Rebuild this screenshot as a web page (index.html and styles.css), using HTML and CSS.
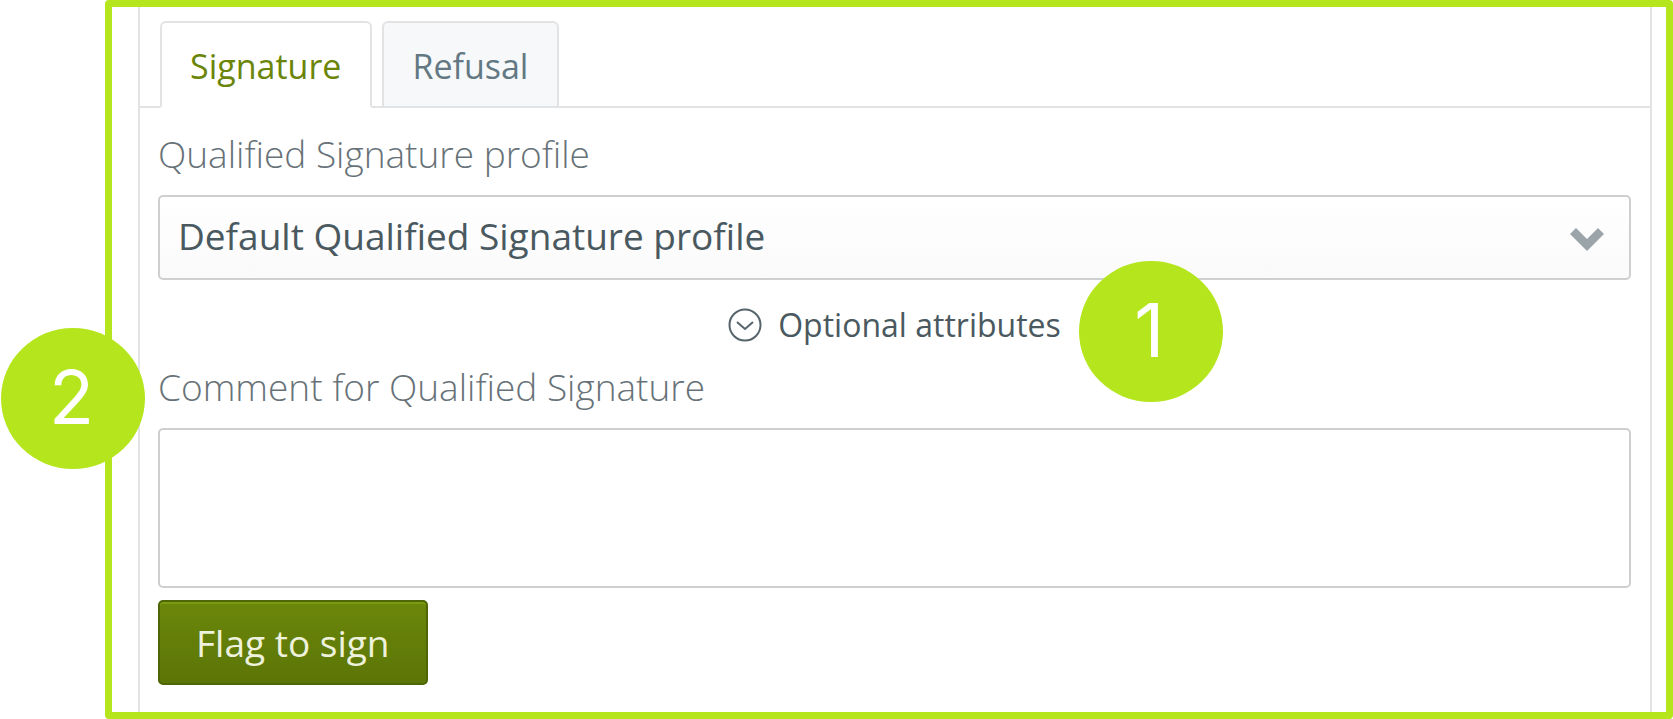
FILE: index.html
```html
<!DOCTYPE html>
<html lang="en">
<head>
<meta charset="utf-8">
<title>Qualified Signature</title>
<link rel="stylesheet" href="styles.css">
</head>
<body>
<main class="callout">
  <span class="badge badge-frame">2</span>
  <form class="panel">
    <div class="tabs" role="tablist">
      <button class="tab tab-active" type="button" role="tab" aria-selected="true">Signature</button>
      <button class="tab" type="button" role="tab" aria-selected="false">Refusal</button>
    </div>
    <div class="fields">
      <label class="label" for="profile">Qualified Signature profile</label>
      <div class="select-wrap">
        <select class="control select" id="profile">
          <option>Default Qualified Signature profile</option>
        </select>
        <svg class="select-arrow" viewBox="0 0 36 24" aria-hidden="true"><path d="M1 7 7 1 18 12 29 1 35 7 18 24Z"/></svg>
      </div>
      <div class="options">
        <button class="toggle" type="button">
          <svg class="toggle-icon" viewBox="0 0 34 34" aria-hidden="true"><circle cx="17" cy="17" r="15.5"/><path d="M9 14 17 21 25 14"/></svg>
          Optional attributes
        </button>
        <span class="badge badge-options">1</span>
      </div>
      <label class="label" for="comment">Comment for Qualified Signature</label>
      <textarea class="control comment" id="comment"></textarea>
      <button class="submit" type="button">Flag to sign</button>
    </div>
  </form>
</main>
</body>
</html>
```
FILE: styles.css
```css
* {
  box-sizing: border-box;
}

body {
  margin: 0;
  background: #fff;
  color: #4a5960;
  font-family: "Open Sans", "Noto Sans", sans-serif;
}

button,
select,
textarea {
  margin: 0;
  font-family: inherit;
  color: inherit;
}

.callout {
  position: relative;
  display: flex;
  min-height: 100vh;
  margin-left: 105px;
  padding: 0 14px 0 26px;
  border: 7px solid #b5e61d;
  border-radius: 4px;
}

.panel {
  flex: 1;
  min-width: 0;
  border: solid #e1e3e5;
  border-width: 0 2px;
}

.tabs {
  display: flex;
  gap: 10px;
  padding: 14px 20px 0;
  border-bottom: 2px solid #e1e3e5;
}

.tab {
  height: 87px;
  margin-bottom: -2px;
  padding: 2px 29px 0 28px;
  border: 2px solid #e1e3e5;
  border-radius: 6px 6px 0 0;
  background: #f6f8fa;
  color: #637883;
  font-size: 34px;
  line-height: 44px;
}

.tab-active {
  border-bottom-color: #fff;
  background: #fff;
  color: #6b8509;
}

.fields {
  display: flex;
  flex-direction: column;
  align-items: stretch;
  padding: 21px 19px 0 18px;
}

.label {
  margin-bottom: 16px;
  color: #677278;
  font-size: 37px;
  font-weight: 300;
  line-height: 50px;
}

.control {
  display: block;
  width: 100%;
  border: 2px solid #cdcfd0;
  border-radius: 5px;
  background: #fff;
  font-size: 37px;
}

.select-wrap {
  position: relative;
}

.select {
  height: 85px;
  padding: 0 60px 4px 18px;
  appearance: none;
  background: linear-gradient(#fff, #fafafa);
}

.select-arrow {
  position: absolute;
  top: 32px;
  right: 26px;
  width: 36px;
  height: 24px;
  fill: #9ba4a8;
  pointer-events: none;
}

.options {
  position: relative;
  align-self: center;
  margin: 21px 0 13px;
}

.toggle {
  display: flex;
  align-items: center;
  gap: 16px;
  padding: 0;
  border: 0;
  background: none;
  font-size: 32px;
  line-height: 48px;
}

.toggle-icon {
  width: 34px;
  height: 34px;
  fill: none;
  stroke: #56646b;
  stroke-width: 2;
}

.badge {
  position: absolute;
  display: flex;
  align-items: center;
  justify-content: center;
  width: 144px;
  height: 141px;
  padding: 0 3px 4px 0;
  border-radius: 50%;
  background: #b5e61d;
  color: #fff;
  font-family: Inter, sans-serif;
  font-size: 74px;
  line-height: 80px;
}

.badge-frame {
  top: 321px;
  left: -111px;
}

.badge-options {
  top: -40px;
  left: calc(100% + 18px);
}

.comment {
  height: 160px;
  margin-bottom: 12px;
  padding: 12px 20px;
  resize: none;
}

.submit {
  align-self: flex-start;
  height: 85px;
  padding: 0 36px;
  border: 2px solid #4e6605;
  border-radius: 5px;
  background: linear-gradient(#6b870a, #5c7507);
  box-shadow: inset 0 2px #7a9a12;
  color: #eef2dc;
  font-size: 37px;
}
```
